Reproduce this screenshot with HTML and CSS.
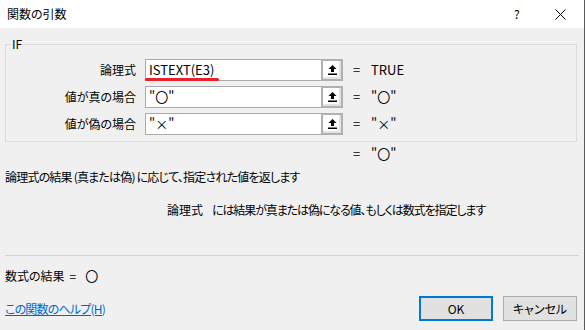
FILE: index.html
```html
<!DOCTYPE html>
<html lang="ja">
<head>
<meta charset="utf-8">
<link rel="stylesheet" href="styles.css">
</head>
<body>
<div class="window">
  <div class="titlebar">
    <span class="title">関数の引数</span>
    <span class="help">?</span>
    <svg class="close" width="11" height="11" viewBox="0 0 11 11"><path d="M0.5 0.5 L10.5 10.5 M10.5 0.5 L0.5 10.5" stroke="#000" stroke-width="1" fill="none"/></svg>
  </div>
  <div class="content">
    <fieldset class="group">
      <legend>IF</legend>
      <div class="args">
        <span class="label">論理式</span>
        <div class="field">
          <span class="text">ISTEXT(E3)</span>
          <span class="mark"></span>
          <span class="ref"><svg width="9" height="10" viewBox="0 0 9 10"><polygon points="4.5,0 8.5,4 6,4 6,7 3,7 3,4 0.5,4" fill="#000"/><rect x="0" y="8.5" width="9" height="1.5" fill="#000"/></svg></span>
        </div>
        <span class="eq">=</span>
        <span class="val">TRUE</span>

        <span class="label">値が真の場合</span>
        <div class="field">
          <span class="text">"〇"</span>
          <span class="ref"><svg width="9" height="10" viewBox="0 0 9 10"><polygon points="4.5,0 8.5,4 6,4 6,7 3,7 3,4 0.5,4" fill="#000"/><rect x="0" y="8.5" width="9" height="1.5" fill="#000"/></svg></span>
        </div>
        <span class="eq">=</span>
        <span class="val">"〇"</span>

        <span class="label">値が偽の場合</span>
        <div class="field">
          <span class="text">"×"</span>
          <span class="ref"><svg width="9" height="10" viewBox="0 0 9 10"><polygon points="4.5,0 8.5,4 6,4 6,7 3,7 3,4 0.5,4" fill="#000"/><rect x="0" y="8.5" width="9" height="1.5" fill="#000"/></svg></span>
        </div>
        <span class="eq">=</span>
        <span class="val">"×"</span>
      </div>
    </fieldset>
    <div class="result">
      <span class="eq">=</span>
      <span class="val">"〇"</span>
    </div>
    <p class="desc">論理式の結果 (真または偽) に応じて、指定された値を返します</p>
    <p class="argdesc"><span class="argname">論理式</span><span class="argtext">には結果が真または偽になる値、もしくは数式を指定します</span></p>
    <div class="sep"></div>
    <div class="formula"><span>数式の結果</span><span class="feq">=</span><span class="fval">〇</span></div>
    <div class="footer">
      <a class="helplink" href="#">この関数のヘルプ(H)</a>
      <div class="buttons">
        <button class="btn ok">OK</button>
        <button class="btn">キャンセル</button>
      </div>
    </div>
  </div>
</div>
</body>
</html>
```

FILE: styles.css
```css
* { box-sizing: border-box; }
html, body {
  margin: 0;
  padding: 0;
  background: #f0f0f0;
}
body {
  font-family: "Noto Sans CJK JP", "Noto Sans", sans-serif;
  font-size: 12px;
  line-height: 16px;
  color: #000;
  font-feature-settings: "palt";
}
.window {
  width: 585px;
  height: 330px;
  background: #f0f0f0;
  border-right: 1px solid #5a5a5a;
  display: flex;
  flex-direction: column;
}
.titlebar {
  height: 28px;
  background: #fff;
  display: flex;
  align-items: center;
  padding-left: 7px;
}
.title { flex: 1; }
.help {
  width: 12px;
  margin-right: 29px;
  font-size: 12px;
}
.close { margin-right: 18px; }
.content {
  flex: 1;
  padding: 9px 7px 0 5px;
  display: flex;
  flex-direction: column;
}
.group {
  margin: 0;
  padding: 8px 0 6px 0;
  border: 1px solid #dcdcdc;
  width: 572px;
  min-width: 0;
}
.group legend {
  padding: 0 1px;
  margin-left: 5px;
  line-height: 14px;
  font-size: 12px;
}
.args {
  display: grid;
  grid-template-columns: 130px 207px 28px 1fr;
  grid-auto-rows: 22px;
  row-gap: 5px;
  align-items: center;
}
.label {
  text-align: right;
}
.field {
  margin-left: 9px;
  width: 198px;
  height: 22px;
  background: #fff;
  border: 1px solid #a9a9a9;
  display: flex;
  align-items: center;
  position: relative;
}
.field .text {
  flex: 1;
  padding-left: 3px;
  font-size: 13px;
}
.mark {
  position: absolute;
  left: -1px;
  top: 18px;
  width: 74px;
  height: 3px;
  border-radius: 2px;
  background: #e8202b;
}
.ref {
  width: 22px;
  height: 22px;
  margin: -1px -1px -1px 0;
  border: 2px solid #b0b0b0;
  background: #fff;
  box-shadow: inset -2px -2px 0 #e3e3e3;
  display: flex;
  align-items: center;
  justify-content: center;
  padding-bottom: 1px;
}
.eq {
  margin-left: 10px;
  font-size: 13px;
}
.val {
  font-size: 13px;
}
.result {
  margin-top: 4px;
  display: flex;
  padding-left: 338px;
}
.result .eq { width: 18px; margin-left: 10px; }
.desc {
  margin: 7px 0 0 0;
  letter-spacing: -0.8px;
}
.argdesc {
  margin: 17px 0 0 0;
  padding-left: 162px;
  display: flex;
  gap: 9px;
}
.argtext { letter-spacing: -1.1px; }
.sep {
  margin-top: 37px;
  height: 1px;
  background: #d5d5d5;
  width: 574px;
}
.formula {
  margin-top: 12px;
  display: flex;
  align-items: center;
}
.feq { margin-left: 5px; }
.fval { margin-left: 9px; font-size: 13px; }
.footer {
  margin-top: 12px;
  display: flex;
  align-items: center;
  justify-content: space-between;
}
.helplink {
  color: #0066cc;
  text-decoration: underline;
  letter-spacing: -0.8px;
}
.buttons {
  display: flex;
  gap: 10px;
}
.btn {
  width: 74px;
  height: 25px;
  font-family: inherit;
  font-size: 12px;
  background: #e1e1e1;
  border: 1px solid #adadad;
  color: #000;
  padding: 0;
  font-feature-settings: "palt";
}
.btn.ok {
  border: 2px solid #0078d7;
}
```
